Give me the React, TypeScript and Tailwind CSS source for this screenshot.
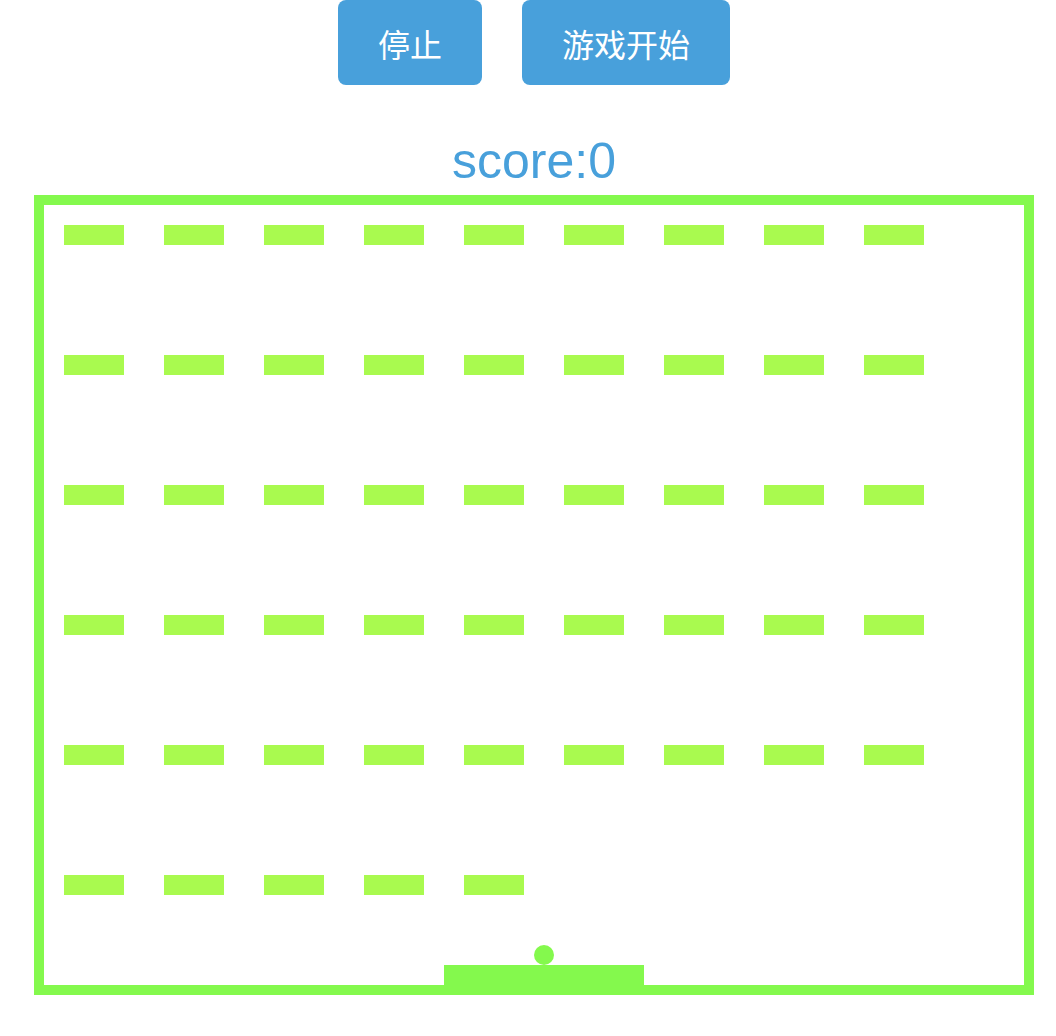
import React from "react";

const bricks = Array.from({ length: 50 });

export default function App() {
  return (
    <div className="w-[1056px] min-h-[1036px] bg-white overflow-hidden" style={{ fontFamily: '"Liberation Sans", "Noto Sans CJK SC", sans-serif' }}>
      {/* 按钮 */}
      <div className="flex justify-center gap-10 pl-3">
        <button
          type="button"
          className="h-[85px] px-10 rounded-lg bg-[#48a0db] text-white text-[32px] leading-none"
          style={{ fontFamily: '"Noto Sans CJK SC", sans-serif' }}
        >
          停止
        </button>
        <button
          type="button"
          className="h-[85px] px-10 rounded-lg bg-[#48a0db] text-white text-[32px] leading-none"
          style={{ fontFamily: '"Noto Sans CJK SC", sans-serif' }}
        >
          游戏开始
        </button>
      </div>

      {/* 分数 */}
      <div className="h-[110px] flex items-end justify-center pl-3 pb-[9px]">
        <div className="text-[50px] leading-[50px] text-[#48a0db]">score:0</div>
      </div>

      {/* 游戏区 */}
      <div className="ml-[34px] w-[1000px] h-[800px] border-[10px] border-[#84f94d] relative">
        <div className="grid grid-cols-9 gap-x-[40px] gap-y-[110px] w-[860px] pt-[20px] pl-[20px] box-content">
          {bricks.map((_, i) => (
            <div key={i} className="w-[60px] h-[20px] bg-[#a9fa4f]" />
          ))}
        </div>
        <div className="absolute left-[490px] top-[740px] w-[20px] h-[20px] rounded-full bg-[#84f94d]" />
        <div className="absolute left-[400px] bottom-0 w-[200px] h-[20px] bg-[#84f94d]" />
      </div>
    </div>
  );
}
